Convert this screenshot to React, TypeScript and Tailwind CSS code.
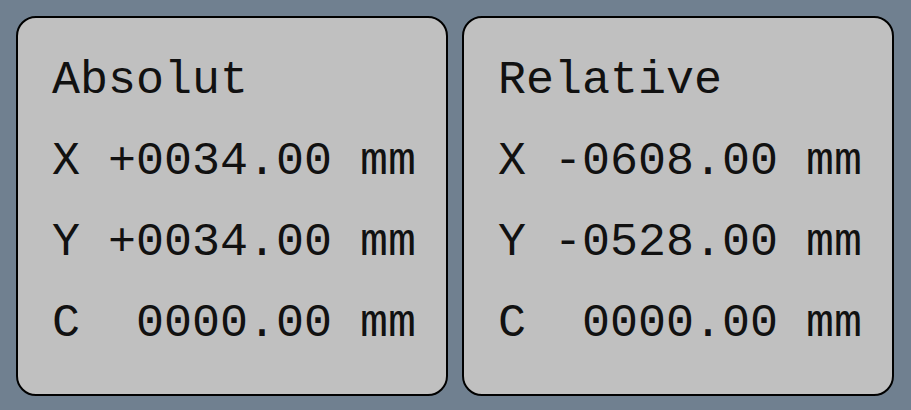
const PANELS = [
  {
    title: "Absolut",
    rows: [
      ["X", "+0034.00"],
      ["Y", "+0034.00"],
      ["C", " 0000.00"],
    ],
  },
  {
    title: "Relative",
    rows: [
      ["X", "-0608.00"],
      ["Y", "-0528.00"],
      ["C", " 0000.00"],
    ],
  },
];

export default function App() {
  return (
    <div className="flex h-[410px] w-[911px] gap-[14px] bg-[#708090] pb-[14px] pl-4 pr-[17px] pt-4">
      {PANELS.map((p) => (
        <div
          key={p.title}
          className="flex-1 rounded-[20px] border-2 border-black bg-[#c0c0c0] pl-[34px] pt-[22px] font-['Courier_New','Liberation_Mono',monospace] text-[46.67px] leading-[81px] text-[#111]"
        >
          <div className="whitespace-pre">{p.title}</div>
          {p.rows.map(([axis, val]) => (
            <div key={axis} className="whitespace-pre">
              {axis} {val} mm
            </div>
          ))}
        </div>
      ))}
    </div>
  );
}
